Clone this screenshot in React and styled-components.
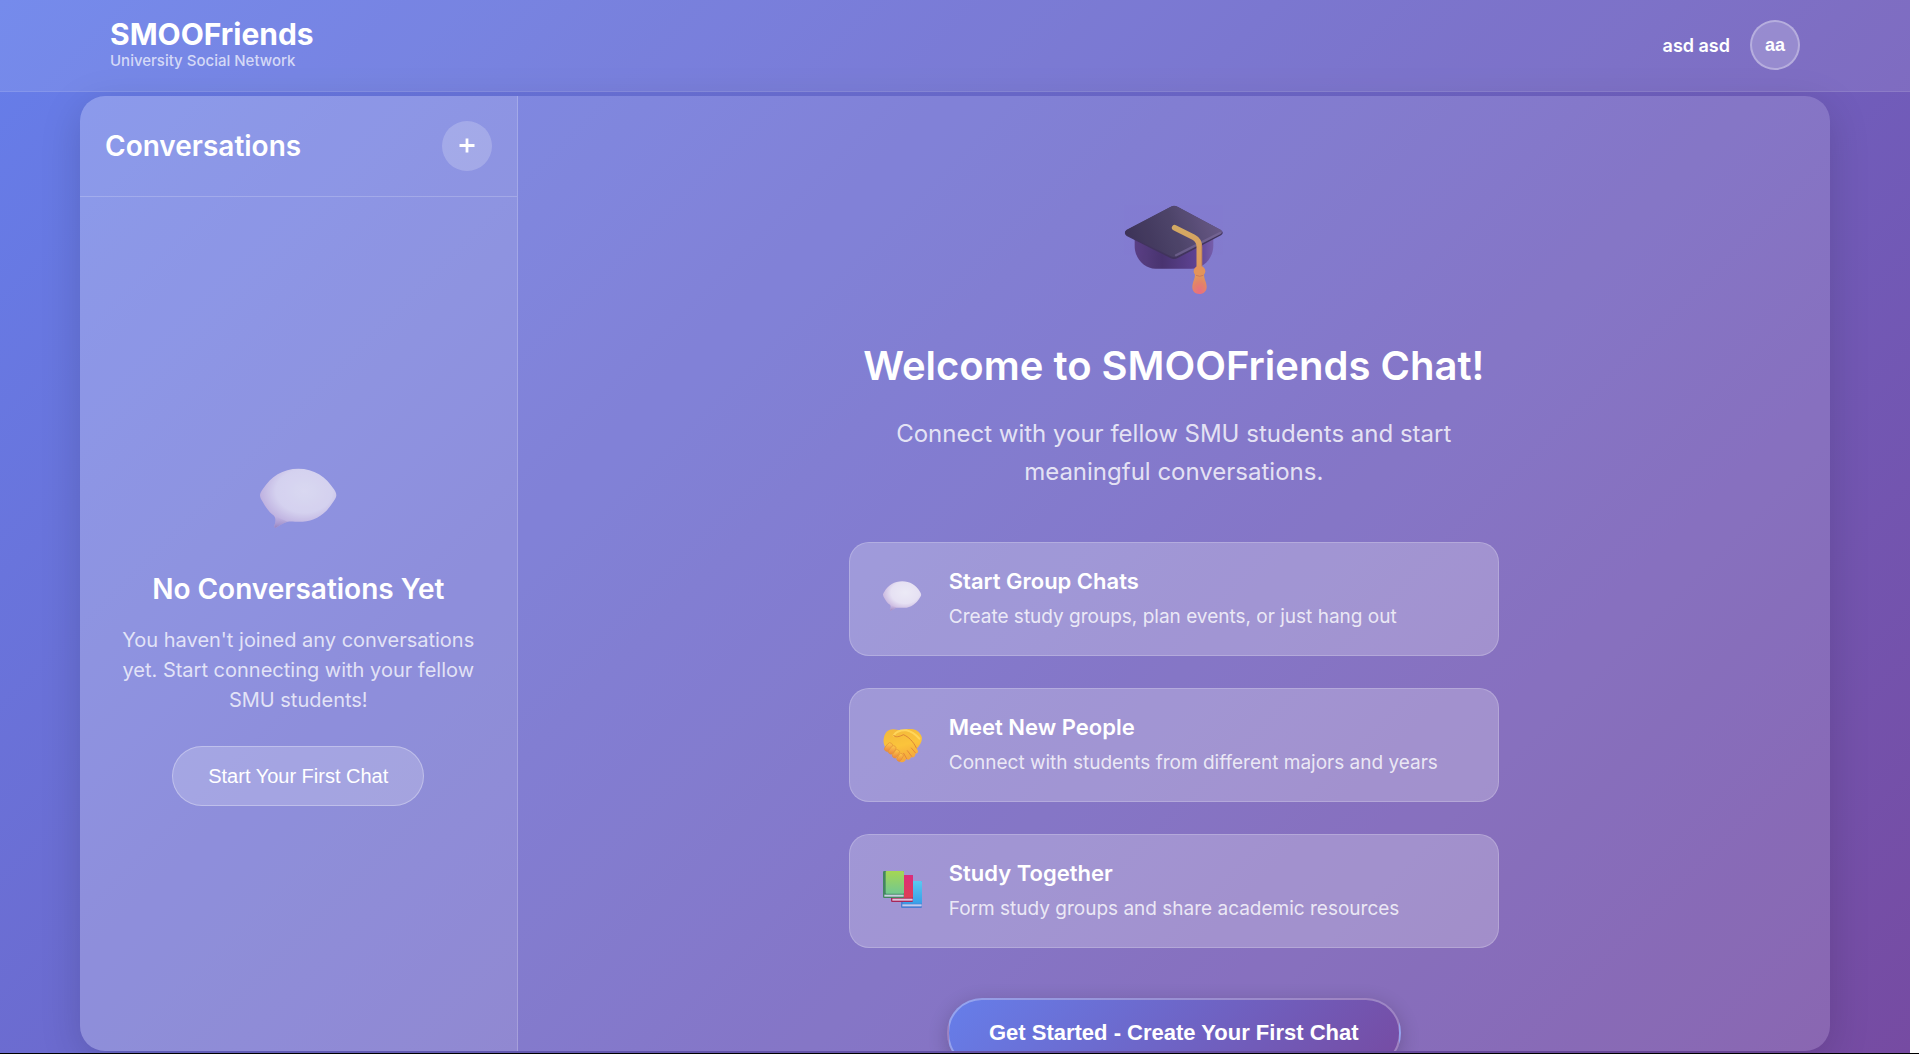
import styled, { createGlobalStyle } from 'styled-components'

const GlobalStyle = createGlobalStyle`
    *, *::before, *::after {
        box-sizing: border-box;
    }
    body {
        margin: 0;
        background: #fff;
        color: #fff;
        font-family: Inter, 'Liberation Sans', sans-serif;
    }
    h1, h2, h3, p {
        margin: 0;
    }
    button {
        font-family: 'Liberation Sans', Arial, sans-serif;
        color: #fff;
        cursor: pointer;
    }
`

const features = [
    {
        icon: 'bubble',
        title: 'Start Group Chats',
        text: 'Create study groups, plan events, or just hang out',
    },
    {
        icon: 'handshake',
        title: 'Meet New People',
        text: 'Connect with students from different majors and years',
    },
    {
        icon: 'books',
        title: 'Study Together',
        text: 'Form study groups and share academic resources',
    },
]

const Frame = styled.div`
    height: 100vh;
    padding-right: 9px;
    border-bottom: 1px solid #000;
`

const Page = styled.div`
    height: 100%;
    display: flex;
    flex-direction: column;
    overflow: hidden;
    background: linear-gradient(135deg, #667eea 0%, #764ba2 100%);
`

const TopBar = styled.header`
    position: relative;
    z-index: 1;
    background: rgba(255, 255, 255, 0.1);
    border-bottom: 1px solid rgba(255, 255, 255, 0.1);
`

const TopBarInner = styled.div`
    display: flex;
    justify-content: space-between;
    align-items: center;
    max-width: 1750px;
    margin: 0 auto;
    padding: 18px 30px 19px;
`

const Brand = styled.div`
    h1 {
        font-size: 30px;
        font-weight: 700;
        line-height: 32px;
    }
    p {
        font-size: 15px;
        font-weight: 500;
        line-height: 22px;
        color: rgba(255, 255, 255, 0.7);
    }
`

const UserArea = styled.div`
    display: flex;
    align-items: center;
    gap: 20px;
    font-size: 18px;
    font-weight: 600;
`

const Avatar = styled.button`
    width: 50px;
    height: 50px;
    padding: 0;
    border-radius: 50%;
    border: 2px solid rgba(255, 255, 255, 0.3);
    background: rgba(255, 255, 255, 0.2);
    font-size: 18px;
    font-weight: 700;
`

const ChatShell = styled.main`
    flex: 1;
    min-height: 0;
    width: calc(100% - 40px);
    max-width: 1750px;
    margin: 4px auto 2px;
    display: grid;
    grid-template-columns: 25% 1fr;
    border-radius: 25px;
    overflow: hidden;
    background: rgba(255, 255, 255, 0.15);
    box-shadow: 0 10px 40px rgba(0, 0, 0, 0.15);
`

const Sidebar = styled.aside`
    display: flex;
    flex-direction: column;
    min-height: 0;
    background: rgba(255, 255, 255, 0.11);
    border-right: 1px solid rgba(255, 255, 255, 0.2);
`

const SidebarHeader = styled.div`
    display: flex;
    justify-content: space-between;
    align-items: center;
    padding: 25px;
    border-bottom: 1px solid rgba(255, 255, 255, 0.2);
    h2 {
        font-size: 28px;
        font-weight: 600;
    }
`

const RoundButton = styled.button`
    display: flex;
    align-items: center;
    justify-content: center;
    width: 50px;
    height: 50px;
    padding: 0;
    border: none;
    border-radius: 50%;
    background: rgba(255, 255, 255, 0.2);
`

const EmptyState = styled.div`
    flex: 1;
    display: flex;
    flex-direction: column;
    align-items: center;
    justify-content: center;
    padding: 0 36px;
    text-align: center;
    svg {
        margin: 22px 0 28px;
        opacity: 0.8;
    }
    h3 {
        font-size: 28px;
        font-weight: 600;
        line-height: 34px;
    }
    p {
        margin: 19px 0 31px;
        font-size: 20px;
        line-height: 30px;
        color: rgba(255, 255, 255, 0.75);
    }
`

const GlassButton = styled.button`
    height: 60px;
    padding: 0 35px;
    border: 1px solid rgba(255, 255, 255, 0.3);
    border-radius: 30px;
    background: rgba(255, 255, 255, 0.2);
    font-size: 20px;
    font-weight: 500;
`

const Welcome = styled.section`
    display: flex;
    flex-direction: column;
    align-items: center;
    min-height: 0;
    padding: 109px 30px 0;
    overflow: hidden;
    text-align: center;
    > * {
        flex-shrink: 0;
    }
    > svg {
        opacity: 0.9;
    }
    > h2 {
        margin-top: 47px;
        font-size: 40px;
        font-weight: 600;
        line-height: 48px;
    }
    > p {
        max-width: 625px;
        margin-top: 25px;
        font-size: 24px;
        line-height: 38px;
        color: rgba(255, 255, 255, 0.8);
    }
`

const FeatureList = styled.div`
    display: flex;
    flex-direction: column;
    gap: 32px;
    width: 100%;
    max-width: 650px;
    margin: 51px 0 50px;
`

const FeatureCard = styled.article`
    display: flex;
    align-items: center;
    gap: 27px;
    padding: 25px 32px;
    border: 1px solid rgba(255, 255, 255, 0.2);
    border-radius: 20px;
    background: rgba(255, 255, 255, 0.23);
    text-align: left;
    h3 {
        font-size: 22px;
        font-weight: 600;
        line-height: 27px;
    }
    p {
        margin-top: 9px;
        font-size: 19px;
        line-height: 26px;
        color: rgba(255, 255, 255, 0.8);
    }
`

const PrimaryButton = styled.button`
    height: 70px;
    padding: 0 40px;
    border: 2px solid rgba(255, 255, 255, 0.3);
    border-radius: 35px;
    background: linear-gradient(135deg, #667eea 0%, #764ba2 100%);
    box-shadow: 0 5px 20px rgba(0, 0, 0, 0.2);
    font-size: 22px;
    font-weight: 700;
`

const PlusIcon = () => (
    <svg width="16" height="16" viewBox="0 0 16 16" aria-hidden="true">
        <path d="M8 0.5v14M0.5 7.5h15" stroke="#fff" strokeWidth="2.8" />
    </svg>
)

const BubbleIcon = ({ size, id }) => (
    <svg width={size} height={size} viewBox="56 40 240 240" aria-hidden="true">
        <defs>
            <radialGradient id={`${id}-fill`} cx="0.58" cy="0.38" r="0.62">
                <stop offset="0" stopColor="#eceaf6" />
                <stop offset="0.6" stopColor="#e6e1f3" />
                <stop offset="1" stopColor="#c6b2dd" />
            </radialGradient>
            <linearGradient id={`${id}-tail`} x1="0" y1="0" x2="0" y2="1">
                <stop offset="0" stopColor="#bfaedb" stopOpacity="0" />
                <stop offset="1" stopColor="#9781bd" />
            </linearGradient>
        </defs>
        <path
            d="M62 134C62 128 66 122 70 116C94 78 130 54 177 54C224 54 260 78 284 116C288 122 291 128 291 134C291 140 287 146 283 152C260 189 230 211 190 213C170 214 157 211 145 213C130 217 119 225 109 231C103 231 105 226 107 219C109 211 110 203 104 195C88 184 78 168 69 152C65 146 62 140 62 134Z"
            fill={`url(#${id}-fill)`}
        />
        <path
            d="M104 195C110 203 109 211 107 219C105 226 103 231 109 231C119 225 130 217 145 213Z"
            fill={`url(#${id}-tail)`}
        />
    </svg>
)

const CapIcon = () => (
    <svg width="100" height="90" viewBox="100 75 300 270" aria-hidden="true">
        <defs>
            <linearGradient id="cap-base" x1="0" y1="0" x2="1" y2="0">
                <stop offset="0" stopColor="#56397c" />
                <stop offset="0.35" stopColor="#432c66" />
                <stop offset="0.8" stopColor="#5b3d8e" />
                <stop offset="1" stopColor="#755ba6" />
            </linearGradient>
            <linearGradient id="cap-board" x1="0" y1="0.6" x2="1" y2="0.4">
                <stop offset="0" stopColor="#352b4a" />
                <stop offset="0.5" stopColor="#473e5d" />
                <stop offset="1" stopColor="#66567f" />
            </linearGradient>
            <linearGradient id="cap-cord" x1="0" y1="0" x2="0" y2="1">
                <stop offset="0" stopColor="#dcae57" />
                <stop offset="1" stopColor="#e99c50" />
            </linearGradient>
            <radialGradient id="cap-tassel" cx="0.5" cy="0.9" r="0.8">
                <stop offset="0" stopColor="#f56c7b" />
                <stop offset="0.6" stopColor="#ef835f" />
                <stop offset="1" stopColor="#ec9a50" />
            </radialGradient>
        </defs>
        <path
            d="M132 165H368V198C367 236 338 266 302 266H195C160 266 133 235 132 200Z"
            fill="url(#cap-base)"
        />
        <path
            d="M240 81Q250 75 261 81L390 150Q402 158 391 166L261 234Q250 240 239 234L108 168Q97 158 108 151Z"
            fill="#3a2d50"
        />
        <path
            d="M240 80Q250 75 261 80L390 149Q400 156 390 162L261 228Q250 234 239 228L108 164Q98 157 108 149Z"
            fill="url(#cap-board)"
        />
        <path d="M256 226L388 159" stroke="#7c6c98" strokeWidth="7" strokeLinecap="round" opacity="0.6" />
        <path
            d="M252 143L309 172Q326 181 326 201V266"
            fill="none"
            stroke="url(#cap-cord)"
            strokeWidth="17"
            strokeLinecap="round"
            strokeLinejoin="round"
        />
        <path d="M333 195V260" stroke="#bd774c" strokeWidth="3" opacity="0.6" />
        <path
            d="M313 282C313 298 305 307 305 322C305 335 314 342 326 342C339 342 348 334 348 321C348 307 340 299 340 282Z"
            fill="url(#cap-tassel)"
        />
        <rect x="309" y="259" width="35" height="29" rx="14" fill="#ee974f" />
        <path d="M316 286Q327 292 338 286" fill="none" stroke="#d57950" strokeWidth="3" />
    </svg>
)

const HandshakeIcon = () => (
    <svg width="40" height="40" viewBox="66 45 120 120" aria-hidden="true">
        <defs>
            <linearGradient id="hand-fill" x1="0.3" y1="0" x2="0.6" y2="1">
                <stop offset="0" stopColor="#f3b93b" />
                <stop offset="0.5" stopColor="#fbc43b" />
                <stop offset="1" stopColor="#f3a33d" />
            </linearGradient>
            <linearGradient id="hand-finger" x1="0" y1="0" x2="0.4" y2="1">
                <stop offset="0" stopColor="#ffd349" />
                <stop offset="1" stopColor="#ee8b40" />
            </linearGradient>
        </defs>
        <path
            d="M72 82C75 66 87 57 101 58L121 61L145 57C164 55 179 63 185 80C188 95 179 107 170 116C177 124 174 131 166 131C167 139 161 144 153 142C151 149 144 151 138 147C137 155 128 159 120 155L91 128C75 116 67 100 72 82Z"
            fill="url(#hand-fill)"
        />
        <path
            d="M101 76C108 66 123 60 139 61C152 64 166 72 178 86"
            fill="none"
            stroke="#ffd65b"
            strokeWidth="6"
            strokeLinecap="round"
        />
        <path
            d="M101 76C105 84 119 80 130 74C145 80 160 94 169 114"
            fill="none"
            stroke="#dd8738"
            strokeWidth="3"
            strokeLinecap="round"
        />
        <path
            d="M154 114L166 128M142 122L155 139M131 130L140 146"
            stroke="#e4873b"
            strokeWidth="3"
            strokeLinecap="round"
        />
        <g stroke="#e29138" strokeWidth="2" fill="url(#hand-finger)">
            <rect x="78" y="97" width="16" height="29" rx="8" transform="rotate(40 86 111)" />
            <rect x="89" y="106" width="15" height="28" rx="8" transform="rotate(38 97 120)" />
            <rect x="101" y="118" width="14" height="27" rx="7" transform="rotate(34 108 131)" />
            <rect x="114" y="130" width="13" height="25" rx="6" transform="rotate(30 121 142)" />
        </g>
    </svg>
)

const BooksIcon = () => (
    <svg width="40" height="40" viewBox="66 63 120 120" aria-hidden="true">
        <defs>
            <linearGradient id="book-green" x1="0" y1="0" x2="0" y2="1">
                <stop offset="0" stopColor="#a5d653" />
                <stop offset="1" stopColor="#72c890" />
            </linearGradient>
            <linearGradient id="book-red" x1="0" y1="0" x2="0" y2="1">
                <stop offset="0" stopColor="#dc2b7c" />
                <stop offset="1" stopColor="#dd4054" />
            </linearGradient>
            <linearGradient id="book-blue" x1="0" y1="0" x2="0" y2="1">
                <stop offset="0" stopColor="#5bc9f1" />
                <stop offset="1" stopColor="#399fe8" />
            </linearGradient>
        </defs>
        <rect x="123" y="93" width="63" height="81" rx="4" fill="#4b7dd3" />
        <rect x="129" y="93" width="57" height="68" rx="3" fill="url(#book-blue)" />
        <rect x="127" y="163" width="58" height="6" fill="#c2cbed" />
        <rect x="93" y="75" width="66" height="81" rx="4" fill="#a82658" />
        <rect x="99" y="75" width="60" height="68" rx="3" fill="url(#book-red)" />
        <rect x="97" y="146" width="61" height="6" fill="#e0c4dd" />
        <rect x="69" y="63" width="63" height="81" rx="4" fill="#438660" />
        <rect x="77" y="63" width="55" height="68" rx="3" fill="url(#book-green)" />
        <rect x="73" y="134" width="58" height="6" fill="#c9cfe0" />
    </svg>
)

const FeatureIcon = ({ name }) => {
    if (name === 'handshake') return <HandshakeIcon />
    if (name === 'books') return <BooksIcon />
    return <BubbleIcon size={40} id="bubble-small" />
}

const App = () => {
    return (
        <Frame>
            <GlobalStyle />
            <Page>
                <TopBar>
                    <TopBarInner>
                        <Brand>
                            <h1>SMOOFriends</h1>
                            <p>University Social Network</p>
                        </Brand>
                        <UserArea>
                            <span>asd asd</span>
                            <Avatar type="button">aa</Avatar>
                        </UserArea>
                    </TopBarInner>
                </TopBar>
                <ChatShell>
                    <Sidebar>
                        <SidebarHeader>
                            <h2>Conversations</h2>
                            <RoundButton type="button" aria-label="New conversation">
                                <PlusIcon />
                            </RoundButton>
                        </SidebarHeader>
                        <EmptyState>
                            <BubbleIcon size={80} id="bubble-large" />
                            <h3>No Conversations Yet</h3>
                            <p>
                                You haven't joined any conversations yet. Start connecting with your
                                fellow SMU students!
                            </p>
                            <GlassButton type="button">Start Your First Chat</GlassButton>
                        </EmptyState>
                    </Sidebar>
                    <Welcome>
                        <CapIcon />
                        <h2>Welcome to SMOOFriends Chat!</h2>
                        <p>Connect with your fellow SMU students and start meaningful conversations.</p>
                        <FeatureList>
                            {features.map((feature) => (
                                <FeatureCard key={feature.title}>
                                    <FeatureIcon name={feature.icon} />
                                    <div>
                                        <h3>{feature.title}</h3>
                                        <p>{feature.text}</p>
                                    </div>
                                </FeatureCard>
                            ))}
                        </FeatureList>
                        <PrimaryButton type="button">Get Started - Create Your First Chat</PrimaryButton>
                    </Welcome>
                </ChatShell>
            </Page>
        </Frame>
    )
}

export default App
